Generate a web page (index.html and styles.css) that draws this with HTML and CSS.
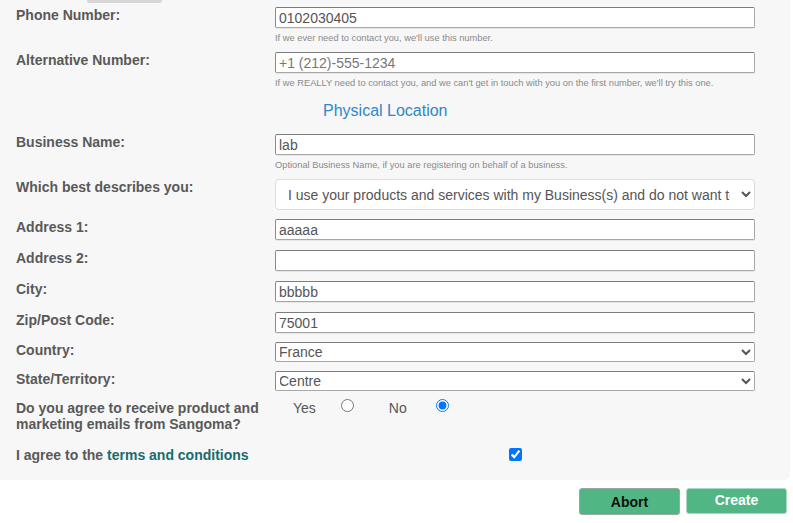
FILE: index.html
```html
<!DOCTYPE html>
<html>
<head>
<meta charset="utf-8">
<link rel="stylesheet" href="styles.css">
</head>
<body>
<div class="panel">
  <div class="top-stub"></div>

  <div class="row r-phone">
    <label class="lbl">Phone Number:</label>
    <div class="field">
      <input class="txt" type="text" value="0102030405">
      <div class="help">If we ever need to contact you, we'll use this number.</div>
    </div>
  </div>

  <div class="row r-alt">
    <label class="lbl">Alternative Number:</label>
    <div class="field">
      <input class="txt" type="text" placeholder="+1 (212)-555-1234">
      <div class="help">If we REALLY need to contact you, and we can't get in touch with you on the first number, we'll try this one.</div>
    </div>
  </div>

  <div class="row r-head">
    <div class="lbl"></div>
    <h3 class="section">Physical Location</h3>
  </div>

  <div class="row r-bus">
    <label class="lbl">Business Name:</label>
    <div class="field">
      <input class="txt" type="text" value="lab">
      <div class="help">Optional Business Name, if you are registering on behalf of a business.</div>
    </div>
  </div>

  <div class="row r-which">
    <label class="lbl">Which best describes you:</label>
    <div class="field">
      <select class="big-select">
        <option>I use your products and services with my Business(s) and do not want to resell</option>
      </select>
    </div>
  </div>

  <div class="row r-addr">
    <label class="lbl">Address 1:</label>
    <div class="field"><input class="txt" type="text" value="aaaaa"></div>
  </div>
  <div class="row r-addr">
    <label class="lbl">Address 2:</label>
    <div class="field"><input class="txt" type="text" value=""></div>
  </div>
  <div class="row r-addr">
    <label class="lbl">City:</label>
    <div class="field"><input class="txt" type="text" value="bbbbb"></div>
  </div>
  <div class="row r-addr">
    <label class="lbl">Zip/Post Code:</label>
    <div class="field"><input class="txt" type="text" value="75001"></div>
  </div>
  <div class="row r-sel">
    <label class="lbl">Country:</label>
    <div class="field">
      <select class="sm-select"><option>France</option></select>
    </div>
  </div>
  <div class="row r-sel">
    <label class="lbl">State/Territory:</label>
    <div class="field">
      <select class="sm-select"><option>Centre</option></select>
    </div>
  </div>

  <div class="row r-agree">
    <label class="lbl">Do you agree to receive product and marketing emails from Sangoma?</label>
    <div class="field radios">
      <span class="opt yes">Yes</span>
      <input class="radio r1" type="radio" name="mk">
      <span class="opt no">No</span>
      <input class="radio r2" type="radio" name="mk" checked>
    </div>
  </div>

  <div class="row r-terms">
    <label class="lbl wide">I agree to the <a class="terms" href="#">terms and conditions</a></label>
    <div class="field check-field">
      <input class="check" type="checkbox" checked>
    </div>
  </div>
</div>

<div class="actions">
  <button class="btn abort" type="button">Abort</button>
  <button class="btn create" type="button">Create</button>
</div>
</body>
</html>
```

FILE: styles.css
```css
* { box-sizing: border-box; }

html, body {
  margin: 0;
  padding: 0;
  background: #ffffff;
  font-family: "Liberation Sans", Arial, sans-serif;
}

.panel {
  width: 790px;
  background: #f7f7f7;
  border-radius: 0 0 6px 0;
  padding: 0 0 17px 16px;
}

.top-stub {
  width: 75px;
  height: 3px;
  margin-left: 71px;
  background: #d6d6d6;
  border-radius: 0 0 6px 6px;
}

.row {
  display: flex;
  align-items: flex-start;
}

.lbl {
  width: 259px;
  flex: none;
  font-size: 14px;
  line-height: 16px;
  font-weight: bold;
  color: #595959;
  padding-right: 10px;
}

.field {
  width: 480px;
  flex: none;
}

.txt {
  display: block;
  width: 480px;
  height: 21px;
  margin: 0;
  padding: 0 3px;
  font-family: "Liberation Sans", Arial, sans-serif;
  font-size: 14px;
  color: #555;
  background: #fff;
  border: 1px solid #a8a8a8;
  border-top-color: #7c7c7c;
  border-left-color: #8a8a8a;
  border-radius: 2px;
  box-shadow: 0 1px 0 #e6e6e6;
  outline: none;
}

.txt::placeholder { color: #777; }

.help {
  margin-top: 4px;
  font-size: 9.3px;
  line-height: 12px;
  color: #8a8a8a;
}

.r-phone { margin-top: 4px; }
.r-alt { margin-top: 8px; }

.r-head { margin-top: 12px; }
.section {
  margin: 0 0 0 48px;
  font-size: 16px;
  line-height: 20px;
  font-weight: normal;
  color: #2e87c8;
}

.r-bus { margin-top: 13px; }
.r-which { margin-top: 8px; }

.big-select {
  display: block;
  width: 480px;
  height: 31px;
  margin: 0;
  padding: 0 8px 0 8px;
  font-family: "Liberation Sans", Arial, sans-serif;
  font-size: 14px;
  color: #555;
  background: #fff;
  border: 1px solid #dcdcdc;
  border-radius: 4px;
}

.r-addr { margin-top: 9px; }
.r-addr + .r-addr { margin-top: 10px; }

.r-sel { margin-top: 9px; }

.sm-select {
  display: block;
  width: 480px;
  height: 20px;
  margin: 0;
  padding: 0;
  text-indent: -1px;
  font-family: "Liberation Sans", Arial, sans-serif;
  font-size: 14px;
  color: #555;
  background: #fff;
  border: 1px solid #a8a8a8;
  border-top-color: #7c7c7c;
  border-left-color: #8a8a8a;
  border-radius: 2px;
}

.r-agree { margin-top: 9px; }

.radios {
  display: flex;
  align-items: flex-start;
  font-size: 14px;
  line-height: 16px;
  color: #555;
}

.opt.yes { margin-left: 18px; }
.radio {
  width: 13px;
  height: 13px;
  margin: 0;
  margin-top: -1px;
}
.r1 { margin-left: 25px; }
.opt.no { margin-left: 35px; }
.r2 { margin-left: 29px; }

.r-terms { margin-top: 15px; align-items: center; }
.lbl.wide { white-space: nowrap; }

.terms {
  color: #176b6e;
  text-decoration: none;
}

.check-field {
  display: flex;
  justify-content: center;
}

.check {
  width: 13px;
  height: 13px;
  margin: 0;
  margin-top: -2px;
}

.actions {
  display: flex;
  justify-content: flex-end;
  gap: 6px;
  padding: 8px 6px 0 0;
  width: 793px;
}

.btn {
  width: 101px;
  height: 27px;
  margin: 0;
  font-family: "Liberation Sans", Arial, sans-serif;
  font-size: 14px;
  font-weight: bold;
  background: #50b683;
  border-radius: 3px;
  cursor: pointer;
}

.btn.abort {
  color: #111;
  border: 1px solid #9aa8a0;
  padding-top: 2px;
}

.btn.create {
  color: #fff;
  height: 26px;
  border: 1px solid #a9d8c2;
  padding-bottom: 3px;
}
```
